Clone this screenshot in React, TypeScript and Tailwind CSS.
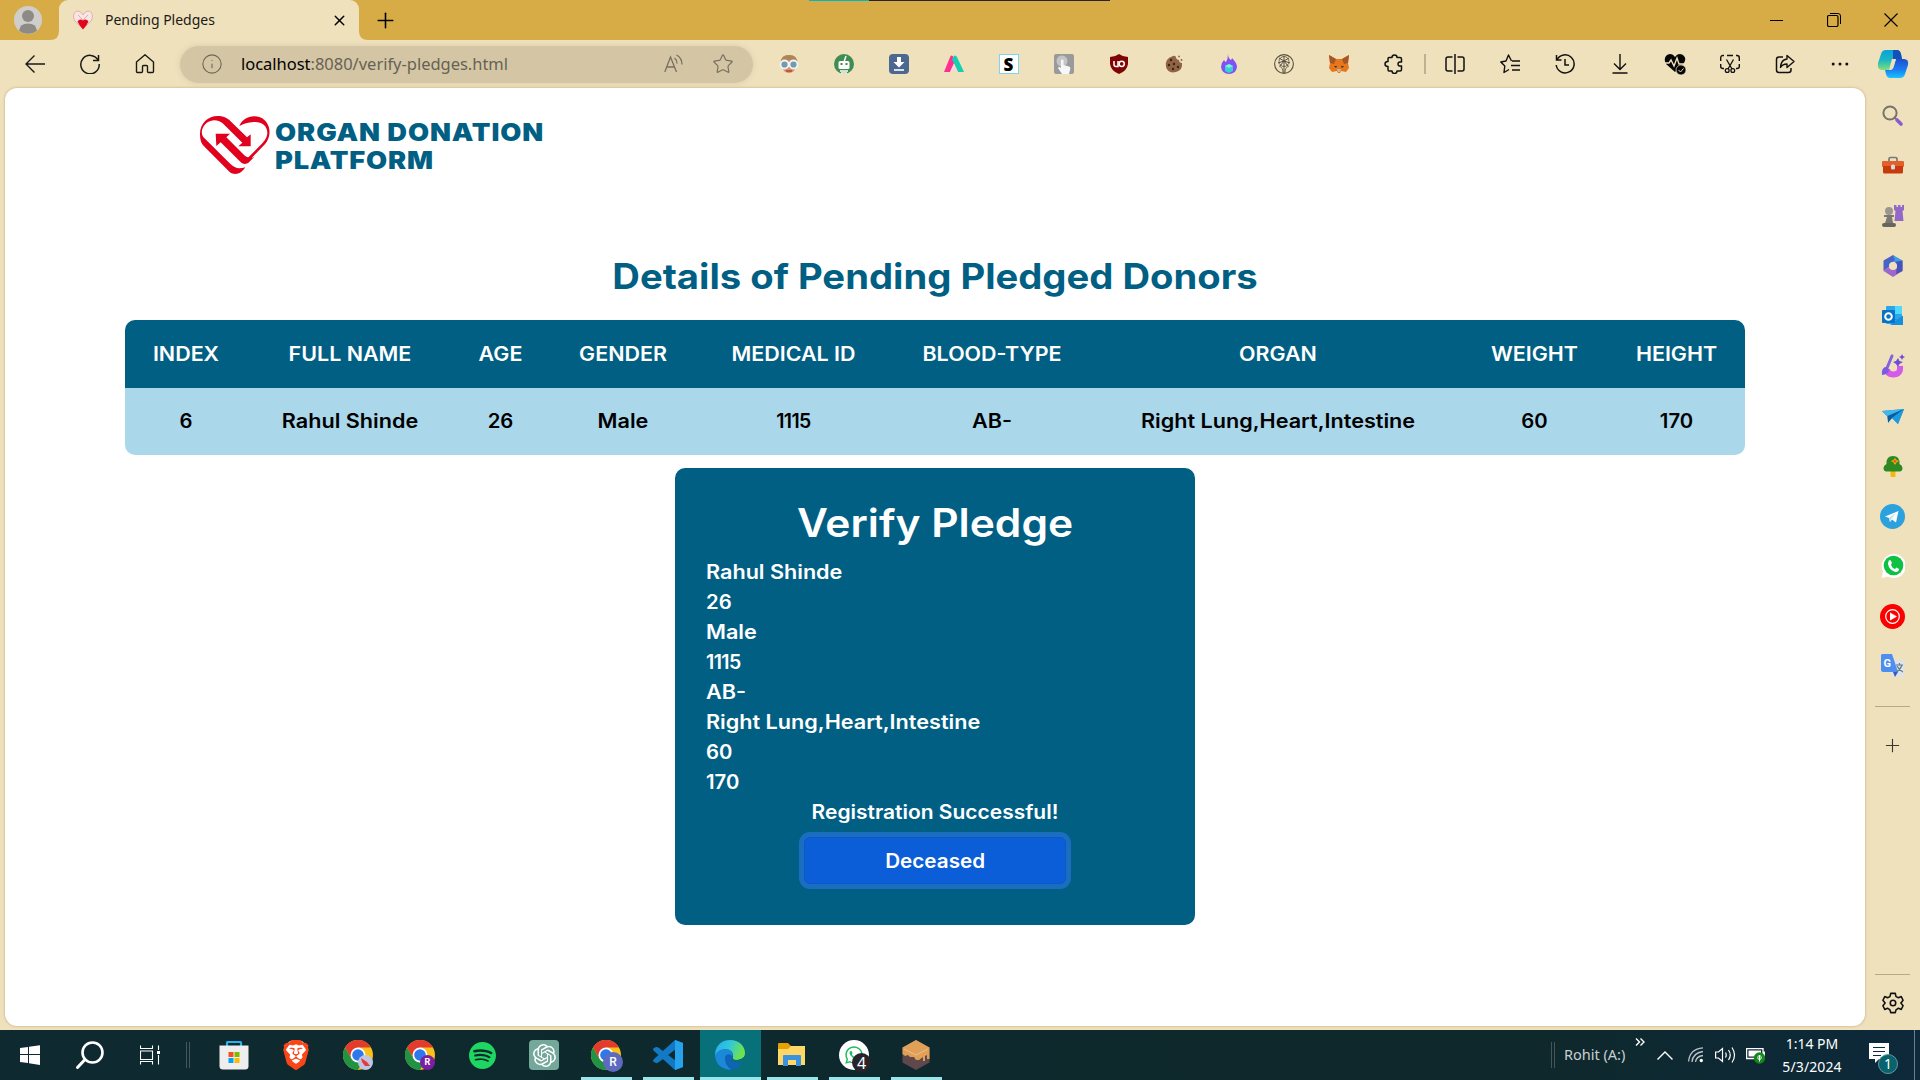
import React from "react";
import { Plus, X, Info, Star } from "lucide-react";
import { SiBrave, SiOpenai, SiSpotify } from "react-icons/si";
import { FaWhatsapp } from "react-icons/fa";

type SvgProps = { s?: number; w?: number; h?: number; box?: string; children: React.ReactNode; className?: string };
const Svg = ({ s = 24, w, h, box = "0 0 24 24", children, className }: SvgProps) => (
  <svg width={w ?? s} height={h ?? s} viewBox={box} fill="none" className={className}>
    {children}
  </svg>
);

const Cell = ({ children }: { children: React.ReactNode }) => (
  <div className="flex h-full w-[55px] shrink-0 items-center justify-center">{children}</div>
);

/* ---------- brand marks ---------- */

const HeartLogo = () => (
  <Svg w={71.7} h={60} box="55 45 215 180">
    <g fill="#e2001f">
      <path d="M58 104C56 66 90 42 122 49C134 51 143 57 152 66L199 112L210 103V139H173L185 128L126 70C104 52 72 62 64 91C62 105 66 110 73 116L147 190C163 207 176 207 194 202C182 221 163 228 147 216L70 139C61 130 58 118 58 104Z" />
      <path d="M105 101H148L137 112L191 166C199 174 211 176 221 170L205 187C196 194 187 193 179 185L120 127L107 138Z" />
      <path d="M176 78C186 53 214 43 238 52C264 62 273 93 262 118C257 130 249 137 241 145L204 183C198 188 194 189 190 189L195 180L236 139C247 128 259 116 260 99C260 75 240 64 219 66C202 67 188 72 176 78Z" />
    </g>
  </Svg>
);

const MiniHeart = () => (
  <Svg s={20} box="0 0 20 20">
    <path d="M10 19L2 11C-1 6 1 1 5 1Q8 1 10 5Q12 1 15 1C19 1 21 6 18 11Z" fill="#f9e6e3" stroke="#dfa9a4" strokeWidth=".9" />
    <path d="M4.500 11.500Q7 8 10 10.500Q13 8 15.500 11.500Q14 15 10 19.500Q6 15 4.500 11.500Z" fill="#e1051d" />
    <path d="M5 5L10 10L15 5" stroke="#dfa9a4" strokeWidth=".9" />
  </Svg>
);

const Chrome = ({ badge, color }: { badge: React.ReactNode; color: string }) => (
  <div className="relative h-[30px] w-[30px]">
    <Svg s={30} box="0 0 30 30">
      <circle cx="15" cy="15" r="15" fill="#fbc116" />
      <path d="M15 15L8.500 18.800L2 7.500A15 15 0 0 1 28 7.500H15Z" fill="#e33b2e" />
      <path d="M2 7.500L8.500 18.800A7.500 7.500 0 0 0 15 22.500L13.500 30A15 15 0 0 1 2 7.500Z" fill="#229342" />
      <path d="M15 30L21.500 18.800L15 22.500L8.500 18.800L13 30Z" fill="#229342" />
      <circle cx="15" cy="15" r="7.500" fill="#fff" />
      <circle cx="15" cy="15" r="5.800" fill="#2d78ea" />
    </Svg>
    <div className={"absolute flex items-center justify-center rounded-full font-['Roboto'] leading-none text-white " + color}>
      {badge}
    </div>
  </div>
);

const Copilot = () => (
  <Svg w={32} h={32} box="0 -1 32 30">
    <defs>
      <linearGradient id="ca" x1="0" y1="0" x2="0" y2="1"><stop stopColor="#0aa2dc" /><stop offset=".5" stopColor="#1bb6c2" /><stop offset="1" stopColor="#7ee07a" /></linearGradient>
      <linearGradient id="cb" x1="0" y1="0" x2="0" y2="1"><stop stopColor="#1d4fd0" /><stop offset=".55" stopColor="#1c7bf0" /><stop offset="1" stopColor="#19c5ff" /></linearGradient>
    </defs>
    <path d="M9 0H20Q23 0 24 4L25 9H19Q16 9 15 13L13 20H5Q0 20 1 13L4 4Q5 0 9 0Z" fill="url(#ca)" />
    <path d="M23 28H13Q10 28 9 24L8 20H13Q16 20 17 16L19 9H27Q32 9 31 15L28 24Q27 28 23 28Z" fill="url(#cb)" />
    <path d="M16 0H20Q23 0 24 4L25 9H19Q17 9 16 11Z" fill="#1450b8" />
    <path d="M15 9H19L16 17Q15 20 12 20Z" fill="#f0e1bd" />
  </Svg>
);

/* ---------- browser chrome ---------- */

const TabStrip = () => (
  <div className="relative flex h-10 items-stretch bg-[#d7ac46]">
    <div className="flex w-[59px] items-center pl-[14px]">
      <Svg s={28} box="0 0 28 28">
        <circle cx="14" cy="14" r="14" fill="#d0cecb" />
        <circle cx="14" cy="10" r="6" fill="#8e8b87" />
        <path d="M5 24.500Q6 17.500 14 17.500T23 24.500A14 14 0 0 1 5 24.500Z" fill="#8e8b87" />
      </Svg>
    </div>
    <div className="relative flex w-[300px] items-center rounded-t-[9px] bg-[#f0e1bd] pl-[14px]">
      <Svg s={9} box="0 0 9 9" className="absolute -left-[9px] bottom-0"><path d="M9 0V9H0Q9 9 9 0Z" fill="#f0e1bd" /></Svg>
      <Svg s={9} box="0 0 9 9" className="absolute -right-[9px] bottom-0"><path d="M0 0V9H9Q0 9 0 0Z" fill="#f0e1bd" /></Svg>
      <MiniHeart />
      <span className="ml-[12px] -mt-[2px] text-[14px] text-[#1b1a17]">Pending Pledges</span>
      <X size={17} strokeWidth={2} className="absolute right-[11px] top-[12px] text-black" />
    </div>
    <div className="flex w-[53px] items-center justify-center"><Plus size={25} strokeWidth={1.500} className="text-black" /></div>
    <div className="absolute left-[809px] top-0 flex h-px w-[301px] bg-[#2b2325]"><div className="w-[60px] bg-[#00b8c0]" /></div>
    <div className="ml-auto flex items-center text-black">
      <div className="flex w-[57px] justify-center"><Svg s={14} box="0 0 14 14"><path d="M0 7.500H13" stroke="#000" /></Svg></div>
      <div className="flex w-[57px] justify-center">
        <Svg s={14} box="0 0 14 14"><rect x=".5" y="2.500" width="10.500" height="11" rx="1.500" stroke="#000" strokeWidth="1.200" /><path d="M3 .5H11Q13.500 .5 13.500 3V11" stroke="#000" /></Svg>
      </div>
      <div className="flex w-[58px] justify-center"><Svg s={14} box="0 0 14 14"><path d="M.5 .5L13.500 13.500M13.500 .5L.5 13.500" stroke="#000" strokeWidth="1.100" /></Svg></div>
    </div>
  </div>
);

const extensions: React.ReactNode[] = [
  <Svg s={20} box="0 0 20 20">
    <path d="M2 10Q1 1 10 1T18 10L15 17Q10 21 5 17Z" fill="#d9906b" />
    <path d="M1.500 9Q2 1 10 1T18.500 9L14 6H6Z" fill="#a9875a" />
    <circle cx="5.500" cy="10.500" r="4" fill="#6f9cae" stroke="#f3f3f3" strokeWidth="1.800" /><circle cx="14.500" cy="10.500" r="4" fill="#6f9cae" stroke="#f3f3f3" strokeWidth="1.800" />
    <path d="M7 17H13" stroke="#b3493c" strokeWidth="1.500" />
  </Svg>,
  <Svg s={20} box="0 0 20 20">
    <circle cx="10" cy="10" r="10" fill="#3f8d50" />
    <path d="M10 8L12 2" stroke="#fff" strokeWidth="1.500" />
    <rect x="4.500" y="7" width="11" height="8" rx="1.500" fill="#fff" />
    <rect x="6.500" y="9" width="2" height="2" fill="#3f8d50" /><rect x="11.500" y="9" width="2" height="2" fill="#3f8d50" />
    <path d="M6 17H14M7 19H13" stroke="#fff" strokeWidth="1.500" />
  </Svg>,
  <Svg s={20} box="0 0 20 20">
    <rect width="20" height="20" rx="4" fill="#4c6790" />
    <path d="M8 3H12V8H15.500L10 13.500L4.500 8H8Z" fill="#fff" /><path d="M5 16H15" stroke="#fff" strokeWidth="1.600" />
  </Svg>,
  <Svg s={20} box="0 0 20 20">
    <path d="M0 18L6.500 2Q8 .5 9.500 3L11 7L6 18Z" fill="#ff2f92" /><path d="M8 5L10.500 1.500Q12 1 13 3L20 18H14Z" fill="#14cfb0" /><path d="M6 18L10 10L14 18Q10 15 6 18Z" fill="#fbd5db" />
  </Svg>,
  <div className="flex h-5 w-5 items-center justify-center border border-[#7fd6ee] bg-white font-['Noto_Sans'] text-[17px] font-black leading-none text-black">S</div>,
  <Svg s={20} box="0 0 20 20">
    <rect width="20" height="20" rx="2" fill="#9a9a9a" /><circle cx="8" cy="7" r="5.500" fill="#c4c4c4" />
    <path d="M7 6Q8.500 5 9.500 6V11L15 12.500Q17 13 16 16L15 20H8L4 14Q5 12 7 14Z" fill="#f4f8fa" />
  </Svg>,
  <Svg s={20} box="0 0 20 20">
    <path d="M10 0Q14 3 19 3V10Q18 17 10 20Q2 17 1 10V3Q6 3 10 0Z" fill="#800404" />
    <path d="M5 7V10.500Q5 12.500 7 12.500H9V7" stroke="#fff" strokeWidth="1.500" /><circle cx="12.700" cy="9.800" r="2.600" stroke="#fff" strokeWidth="1.500" />
  </Svg>,
  <Svg s={20} box="0 0 20 20">
    <path d="M9 2Q12 1 12 4Q13 6 15 6Q15 9 18 9Q19 16 12 18Q4 20 2 13Q0 5 9 2Z" fill="#8e6445" />
    <circle cx="7" cy="6" r="1.200" fill="#3b241a" /><circle cx="5" cy="11" r="1.200" fill="#3b241a" /><circle cx="10" cy="10" r="1.200" fill="#3b241a" /><circle cx="9" cy="15" r="1.200" fill="#3b241a" /><circle cx="14" cy="13" r="1.200" fill="#3b241a" /><circle cx="15" cy="2.500" r=".9" fill="#8e6445" /><circle cx="17.500" cy="6" r="1" fill="#8e6445" />
  </Svg>,
  <Svg s={20} box="0 0 20 20">
    <path d="M9 0Q9 4 12 6Q13 5 13 4Q18 9 18 13Q17 20 10 20Q3 20 2 13Q2 9 5 6Q6 8 7 8Q9 5 9 0Z" fill="#8250f5" />
    <path d="M10 10L14 12V17L10 19L6 17V12Z" fill="#35d3cf" /><path d="M10 10L14 12L10 14L6 12Z" fill="#7ff0df" />
  </Svg>,
  <Svg s={20} box="0 0 20 20">
    <circle cx="10" cy="10" r="9.400" stroke="#55503f" strokeWidth="1.100" />
    <path d="M10 7V19M10 7L5 4M10 7L15 4M10 7L4 9M10 7L16 9M10 7V2M10 7L6 12M10 7L14 12" stroke="#55503f" /><circle cx="10" cy="7.500" r="5" stroke="#55503f" strokeWidth=".8" /><path d="M5 12Q9 13 9 19M15 12Q11 13 11 19" stroke="#55503f" strokeWidth=".8" />
  </Svg>,
  <Svg s={20} box="0 0 20 20">
    <path d="M0 1L7 5H13L20 1L19 9L20 14L17 18L12 17L11 19H9L8 17L3 18L0 14L1 9Z" fill="#e8761b" /><path d="M0 1L7 5L5 10L1 9ZM20 1L13 5L15 10L19 9Z" fill="#a5552a" /><path d="M8 15L9 18H11L12 15Z" fill="#c6b8a8" /><path d="M5 12L8 12L7 14ZM15 12L12 12L13 14Z" fill="#2b3542" />
  </Svg>,
  <Svg s={20} box="0 0 20 20">
    <path d="M8 3.500Q8 1 10.500 1T13 3.500H16Q17.500 3.500 17.500 5V8Q14 7.500 14 10T17.500 12V15.500Q17.500 17 16 17H13Q13 19.500 10.500 19.500T8 17H5Q4 17 4 15.500V12.500Q1 12.500 1 10T4 7.500V5Q4 3.500 5 3.500Z" stroke="#111" strokeWidth="1.500" strokeLinejoin="round" />
  </Svg>,
];

const tools: React.ReactNode[] = [
  <Svg s={20} box="0 0 20 20"><path d="M7.500 3H3Q1 3 1 5V15Q1 17 3 17H7.500M12.500 3H17Q19 3 19 5V15Q19 17 17 17H12.500M10 0V20" stroke="#111" strokeWidth="1.500" /></Svg>,
  <Svg s={20} box="0 0 20 20"><path d="M11.500 7L8.500 1L6 7L.8 8L4.800 12L4 18.500L9 15.500" stroke="#111" strokeWidth="1.400" strokeLinejoin="round" /><path d="M12 7H20M11 11.500H20M12 16H20" stroke="#111" strokeWidth="1.400" /></Svg>,
  <Svg s={20} box="0 0 20 20"><path d="M1.500 1V6H6.500M2 6A9 9 0 1 1 1.200 11M10 5V11H14" stroke="#111" strokeWidth="1.500" /></Svg>,
  <Svg s={20} box="0 0 20 20"><path d="M10 0V15.500M4 9.500L10 15.500L16 9.500M2.500 19H17.500" stroke="#111" strokeWidth="1.400" /></Svg>,
  <Svg s={22} box="0 0 22 22"><path d="M11 19L2 11Q-1 5 3 2Q8-1 11 4Q14-1 19 2Q23 5 20 10Z" fill="#060606" /><path d="M1 10H5L7 7L10 13L13 5L15 11H20" stroke="#f0e1bd" strokeWidth="1.400" /><circle cx="17" cy="17" r="5" fill="#060606" stroke="#f0e1bd" strokeWidth=".7" /><path d="M14.500 17L16.500 19L19.500 15.500" stroke="#f0e1bd" /></Svg>,
  <Svg s={20} box="0 0 20 20"><path d="M4 14.500H3Q.7 14.500 .7 12.500V10M.7 7V4Q.7 1.500 3 1.500H4M7 1.500H13M16 1.500H17Q19.300 1.500 19.300 4V7M19.300 10V12.500Q19.300 14.500 17 14.500H16" stroke="#111" strokeWidth="1.400" /><path d="M6.500 5.500L12 15M13.500 5.500L8 15" stroke="#111" strokeWidth="1.300" /><circle cx="7.200" cy="16.500" r="1.900" stroke="#111" strokeWidth="1.300" /><circle cx="12.800" cy="16.500" r="1.900" stroke="#111" strokeWidth="1.300" /></Svg>,
  <Svg s={20} box="0 0 20 20"><path d="M8 3H4Q1.500 3 1.500 5.500V16Q1.500 18.500 4 18.500H13.500Q16 18.500 16 16V14" stroke="#111" strokeWidth="1.500" /><path d="M12 1.500L19 7.500L12 13.500V10Q7.500 10 5.500 13.500Q6 5.500 12 5Z" stroke="#111" strokeWidth="1.400" strokeLinejoin="round" /></Svg>,
  <Svg s={18} box="0 0 18 18"><circle cx="2.200" cy="9" r="1.500" fill="#111" /><circle cx="9" cy="9" r="1.500" fill="#111" /><circle cx="15.800" cy="9" r="1.500" fill="#111" /></Svg>,
];

const Toolbar = () => (
  <div className="flex h-12 items-center bg-[#f0e1bd] pl-[7px]">
    <Cell><Svg s={20} box="0 0 20 20"><path d="M20 10H1M9.500 1.500L1 10L9.500 18.500" stroke="#1a1a17" strokeWidth="1.400" /></Svg></Cell>
    <Cell><Svg s={20} box="0 0 20 20"><path d="M18.500 1V6.500H13M18 6A9.200 9.200 0 1 0 19.200 10" stroke="#1a1a17" strokeWidth="1.500" /></Svg></Cell>
    <Cell><Svg s={20} box="0 0 20 20"><path d="M1.500 8L10 .8L18.500 8V17.500Q18.500 18.500 17.500 18.500H13.500Q12.500 18.500 12.500 17.500V12.500Q12.500 11.500 11.500 11.500H8.500Q7.500 11.500 7.500 12.500V17.500Q7.500 18.500 6.500 18.500H2.500Q1.500 18.500 1.500 17.500Z" stroke="#1a1a17" strokeWidth="1.400" /></Svg></Cell>
    <div className="ml-[8px] flex h-[37px] w-[573px] shrink-0 items-center rounded-full bg-[#d4c6a5] pl-[21px] pr-[19px] shadow-[0_0_6px_#d9cba9]">
      <Info size={22} strokeWidth={1.200} className="text-[#6f6856]" />
      <span className="ml-[18px] text-[16.500px] tracking-[-0.020px] text-[#676254]"><span className="text-black">localhost</span>:8080/verify-pledges.html</span>
      <div className="ml-auto flex items-center gap-[28px]">
        <Svg s={20} box="0 0 20 20"><path d="M.8 18L6.500 3L12.500 18M3 13H10.500" stroke="#77705f" strokeWidth="1.300" /><path d="M10.500 4Q13 6 13 9.500M12.500 1Q18 4 18 10.500" stroke="#77705f" strokeWidth="1.300" /></Svg>
        <Star size={22} strokeWidth={1.300} className="text-[#77705f]" />
      </div>
    </div>
    <div className="ml-[8px] flex h-full">{extensions.map((e, i) => <Cell key={i}>{e}</Cell>)}</div>
    <div className="ml-[3px] mr-[1.500px] h-5 w-[1.500px] bg-[#bcb193]" />
    <div className="flex h-full">{tools.map((e, i) => <Cell key={i}>{e}</Cell>)}</div>
    <div className="ml-auto mr-[11px]"><Copilot /></div>
  </div>
);

const sideIcons: React.ReactNode[] = [
  <Svg s={22} box="0 0 22 22"><circle cx="8" cy="8" r="6.600" stroke="#77736c" strokeWidth="2" /><path d="M12 12L14 14" stroke="#77736c" strokeWidth="2" /><path d="M15 15L19 19" stroke="#8a5bd0" strokeWidth="3.600" strokeLinecap="round" /></Svg>,
  <Svg s={22} box="0 0 22 22"><path d="M7 7V4Q7 2.500 8.500 2.500H13.500Q15 2.500 15 4V7" stroke="#777" strokeWidth="1.700" /><rect y="6" width="22" height="6" rx="1" fill="#e1602b" /><path d="M1 11H21V17Q21 18.500 19.500 18.500H2.500Q1 18.500 1 17Z" fill="#c63a0b" /><rect x="9" y="9.500" width="4" height="5" rx="1.500" fill="#d8dce0" /></Svg>,
  <Svg s={22} box="0 0 22 22"><circle cx="7" cy="6" r="4" fill="#9a9792" /><path d="M2 10H12V12H10L11 18H3L5 12H2Z" fill="#7b7874" /><rect y="18" width="14" height="4" rx="2" fill="#686560" /><path d="M12 0H14.500V2H16V0H18.500V2H20V0H22V5L20.500 6L21.500 16H12.500L13.500 6L12 5Z" fill="#9468c9" /></Svg>,
  <Svg s={22} box="0 0 22 22"><path d="M11 0L20.500 5.500V12L14 8Q11 6 8 9Z" fill="#3e9ee5" /><path d="M11 0L1.500 5.500V16L7 12Q7 8 13 5Z" fill="#4a62c8" /><path d="M1.500 16L11 22L20.500 16V10L14 13Q10 16 7 12Z" fill="#9e67c9" /><path d="M20.500 5.500V16L14 19L15 11L13 7Z" fill="#4554b8" /><circle cx="11" cy="11" r="4" fill="#f0e1bd" /></Svg>,
  <Svg s={22} box="0 0 22 22"><rect x="4" y="1" width="16" height="18" rx="1" fill="#28a8ea" /><path d="M13 1H20V9H13Z" fill="#50d9ff" /><path d="M9 12L21 19V11L15 15Z" fill="#0f6ab7" /><path d="M8 20H21V11Z" fill="#1490df" /><rect x="0" y="5" width="13" height="13" rx="1" fill="#0872c6" /><circle cx="6.500" cy="11.500" r="3.300" stroke="#fff" strokeWidth="2" /></Svg>,
  <Svg s={24} box="0 0 24 24"><path d="M19 12Q20 20.500 12 20.500Q6 20 6 15" stroke="#d45ae9" strokeWidth="6" /><path d="M11 2L6 14" stroke="#7f66df" strokeWidth="3" strokeLinecap="round" /><path d="M1 21Q0 15 4 13Q8 13 8 17Q7 20 1 21Z" fill="#7a5be1" /><path d="M17 4L18.500 7L22 8L18.500 10L17 13L15 10L12 8L15 7ZM21 0L22 2L24 3L22 4L21 6L20 4L18 3L20 2Z" fill="#714bd9" /></Svg>,
  <Svg s={22} box="0 0 22 22"><path d="M0 6L22 4L16 19L10 13L6 17L5 11Z" fill="#158bd0" /><path d="M0 6L22 4L5 11Z" fill="#42b6ed" /><path d="M22 4L10 13L6 18L6 11Z" fill="#0b5d9c" /><path d="M22 4L16 19L10 13Z" fill="#1d9be0" /></Svg>,
  <Svg s={22} box="0 0 22 22"><rect x="8.500" y="14" width="5" height="8" rx="1" fill="#f2b90e" /><path d="M4 16.500Q1.500 16 1.500 13Q1.500 10.500 4.500 9Q4 1 11 1T17.500 9Q20.500 10.500 20.500 13Q20.500 16 18 16.500Z" fill="#2e8921" /><path d="M13 3L14.500 5L17 6L14.500 7.500L13 10L11.500 7.500L9 6L11.500 5Z" fill="#f5b400" /><circle cx="13" cy="6.300" r="1.400" fill="#e4552b" /></Svg>,
  <Svg s={25} box="0 0 25 25"><circle cx="12.500" cy="12.500" r="12.500" fill="#2ba1dd" /><path d="M5 12.500L18.500 7L16 18.500L12 15.500L10 18L9 14Z" fill="#fff" /><path d="M9 14L16 9L11 15L10 18Z" fill="#b9dcee" /></Svg>,
  <Svg s={24} box="0 0 24 24"><path d="M12.500 0A12 12 0 1 1 7 22.500L.5 24L2 17.500A12 12 0 0 1 12.500 0Z" fill="#fff" /><circle cx="12.500" cy="11.500" r="9.800" fill="#0fc143" /><path d="M8 6.500Q9 5.500 10 7L11 9Q10 10 10 11Q11 14 14 15L15.500 13.500L18 15Q18 18 14.500 18Q8 16 7 10Q7 7.500 8 6.500Z" fill="#fff" /></Svg>,
  <Svg s={25} box="0 0 25 25"><circle cx="12.500" cy="12.500" r="12.500" fill="#fd0000" /><circle cx="12.500" cy="12.500" r="6.800" stroke="#fff" strokeWidth="1.200" /><path d="M10 8.500L17 12.500L10 16.500Z" fill="#fff" /></Svg>,
  <div className="relative h-6 w-6">
    <Svg s={24}><rect x="10" y="6" width="13.500" height="17" rx="1" fill="#dfe3e6" /><path d="M1 0H11L17 18H2Q0 18 0 16V1Z" fill="#4e8ef3" /><path d="M12 18H17L14 23Z" fill="#3558c8" /><path d="M15 11H22M18.500 9V11M21 11Q19 16 15.500 18M16 12Q18 16 22 18" stroke="#5d7d87" strokeWidth="1.200" /></Svg>
    <span className="absolute left-[3px] top-[4px] font-['Roboto'] text-[11px] font-bold leading-none text-white">G</span>
  </div>,
];

const Sidebar = () => (
  <aside className="flex w-[55px] shrink-0 flex-col items-center">
    <div className="mt-[3px] flex flex-col">{sideIcons.map((e, i) => <div key={i} className="flex h-[50px] items-center justify-center">{e}</div>)}</div>
    <div className="mt-[15px] h-px w-[35px] bg-[#b5a98b]" />
    <Plus size={21} strokeWidth={1.300} className="mt-[28px] text-[#3d382e]" />
    <div className="mt-auto h-px w-[35px] bg-[#b5a98b]" />
    <Svg s={22} box="0 0 24 24" className="mb-[16px] mt-[17px]">
      <path d="M9.500 1.500H14.500L15.300 5L18 6.300L21 5L23 9L20.600 12L23 15L21 19L18 17.700L15.300 19.500L14.500 22.500H9.500L8.700 19.500L6 17.700L3 19L1 15L3.400 12L1 9L3 5L6 6.300L8.700 5Z" stroke="#111" strokeWidth="1.700" strokeLinejoin="round" /><circle cx="12" cy="12" r="3" stroke="#111" strokeWidth="1.700" />
    </Svg>
  </aside>
);

/* ---------- page ---------- */

const columns = [
  ["INDEX", "6"], ["FULL NAME", "Rahul Shinde"], ["AGE", "26"], ["GENDER", "Male"], ["MEDICAL ID", "1115"],
  ["BLOOD-TYPE", "AB-"], ["ORGAN", "Right Lung,Heart,Intestine"], ["WEIGHT", "60"], ["HEIGHT", "170"],
];
const gridCols = "grid grid-cols-[122px_206px_95px_150px_191px_206px_366px_147px_137px] items-center text-center";

/* Words are set in a wide cut of the face, digits stay close to normal width. */
const stretch = (value: string) =>
  value === "1115" ? "tracking-[-0.600px]" : /^\d+$/.test(value) ? "scale-x-[1.04]" : "scale-x-[1.108]";

const PledgePage = () => (
  <main className="ml-[5px] h-[938px] w-[1860px] shrink-0 overflow-hidden rounded-[12px] bg-white font-['Inter',sans-serif] font-semibold shadow-[0_0_3px_#b9a97e]">
    <header className="flex h-[60px] pl-[193.500px] mt-[27px]">
      <HeartLogo />
      <div className="ml-[5px] mt-[4px] text-[24px] font-black leading-[27.500px] text-[#015f84]">
        <div className="origin-left scale-x-[1.135] whitespace-nowrap tracking-[0.800px]">ORGAN DONATION</div>
        <div className="origin-left scale-x-[1.135] tracking-[0.700px]">PLATFORM</div>
      </div>
    </header>
    <h1 className="mt-[80px] scale-x-[1.092] text-center text-[35px] font-bold leading-[42px] text-[#015f84]">Details of Pending Pledged Donors</h1>
    <div className="ml-[120px] mt-[23px] w-[1620px] overflow-hidden rounded-[10px] text-[19.500px]">
      <div className={gridCols + " h-[68px] bg-[#015f84] pt-px text-white"}>{columns.map(([h]) => <div key={h} className="scale-x-[1.1]">{h}</div>)}</div>
      <div className={gridCols + " h-[67px] bg-[#abd7eb] text-black"}>{columns.map(([h, v]) => <div key={h} className={stretch(v)}>{v}</div>)}</div>
    </div>
    <section className="mx-auto mt-[13px] h-[457px] w-[520px] rounded-[10px] bg-[#015f84] px-[31px] pt-[30px] text-[19.500px] leading-[30px] text-white">
      <h2 className="scale-x-[1.09] text-center text-[39px] leading-[50px]">Verify Pledge</h2>
      <div className="mt-[9px]">{columns.slice(1).map(([h, v]) => <p key={h} className={"origin-left " + stretch(v)}>{v}</p>)}</div>
      <p className="scale-x-[1.075] text-center">Registration Successful!</p>
      <button className="mx-auto mt-[10px] block h-[47px] w-[262px] rounded-[6px] border border-[#0a58ca] bg-[#0b5ed7] shadow-[0_0_0_5px_#1b6ebf]"><span className="inline-block scale-x-[1.06]">Deceased</span></button>
    </section>
  </main>
);

/* ---------- taskbar ---------- */

const apps: { icon: React.ReactNode; open?: boolean; active?: boolean }[] = [
  { icon: <Svg w={30} h={30} box="0 0 30 30"><path d="M8 6V2.500Q8 2 8.500 2H21.500Q22 2 22 2.500V6" stroke="#27b2f2" strokeWidth="2.200" /><path d="M.5 5.500H29.500V26Q29.500 29.500 26 29.500H4Q.5 29.500 .5 26Z" fill="#eee" /><path d="M9.500 12H14.500V17H9.500Z" fill="#f25022" /><path d="M15.500 12H20.500V17H15.500Z" fill="#7fba00" /><path d="M9.500 18H14.500V23H9.500Z" fill="#00a4ef" /><path d="M15.500 18H20.500V23H15.500Z" fill="#ffb900" /></Svg> },
  { icon: <div className="relative flex h-[30px] w-[30px] items-center justify-center"><Svg w={26} h={30} box="0 0 26 30" className="absolute left-[2px]"><path d="M7 1H19L22 4L24 9L22 22L13 29L4 22L2 9L4 4Z" fill="#fff" /></Svg><SiBrave size={30} color="#fb4516" className="relative" /></div> },
  { icon: <Chrome color="left-[15px] top-[15px] h-[15px] w-[15px] bg-[#c0c6e2]" badge={<Svg s={9} box="0 0 9 9"><path d="M0 0L6 4L9 8L4 8L1 4Z" fill="#e23a3f" /></Svg>} /> },
  { icon: <Chrome color="left-[15px] top-[15px] h-[15px] w-[15px] bg-[#7b1fa2] text-[9px] font-bold" badge="R" /> },
  { icon: <SiSpotify size={27} color="#1ed760" /> },
  { icon: <div className="flex h-[30px] w-[30px] items-center justify-center rounded-[4px] bg-[#74a89a]"><SiOpenai size={23} color="#fff" /></div> },
  { icon: <Chrome color="left-[12px] top-[12px] h-[20px] w-[20px] bg-[#5c6bc0] text-[12px] font-medium" badge="R" />, open: true },
  { icon: <Svg w={30} h={30} box="0 0 30 30"><path d="M22 0L30 3V27L22 30L1 11Q-1 9 1 8L3 7Q4 6.500 6 8L23 21V9L6 22Q4 23.500 3 23L1 22Q-1 21 1 19Z" fill="#1279c4" /><path d="M22 0L30 3V27L22 30Z" fill="#26a3ed" /></Svg>, open: true },
  { icon: <Svg w={30} h={30} box="0 0 30 30"><defs><linearGradient id="ed" x1="0" y1="0" x2="1" y2=".3"><stop stopColor="#29a8ec" /><stop offset=".5" stopColor="#30c7dd" /><stop offset="1" stopColor="#6ee34e" /></linearGradient></defs><circle cx="15" cy="15" r="15" fill="#0f64b5" /><path d="M0 14C1 4 8 0 15 0C25 0 30 7 30 13C30 18 26 20 21 20Q17 20 18 17Q19 10 11 9Q4 9 0 16Z" fill="url(#ed)" /><path d="M0 15Q3 9 11 9Q18 10 18 16Q12 12 10 17Q9 24 16 29.800Q1 29 0 15Z" fill="#1b88d8" /><path d="M18 17Q17 20 21 20Q26 20 30 16V22L28 23Q25 23.500 20 22.500Q15 20 18 17Z" fill="#087078" /></Svg>, active: true },
  { icon: <Svg w={28} h={26} box="0 0 28 26"><path d="M0 2Q0 1 1 1H10L13 4H27V10H0Z" fill="#e5a100" /><path d="M0 7H10L13 4H27V23H0Z" fill="#ffd766" /><path d="M5 24V14Q5 13 6 13H22Q23 13 23 14V24H18V18H10V24Z" fill="#3b93de" /></Svg>, open: true },
  { icon: <div className="relative flex h-[30px] w-[30px] items-center justify-center rounded-full bg-white"><FaWhatsapp size={20} color="#20bd5a" /><div className="absolute left-[13px] top-[13px] flex h-[19px] w-[19px] items-center justify-center rounded-full bg-[#27252b] text-[16px] leading-none text-white">4</div></div>, open: true },
  { icon: <Svg w={28} h={30} box="0 0 28 30"><path d="M14 0L27.500 7.500V22.500L14 30L.5 22.500V7.500Z" fill="#5e484c" /><path d="M14 0L27.500 7.500V19H25V15L23 16V21H21V17L17 20H14L12 17H8L6 15L3 16L.5 14V7.500Z" fill="#e0a058" /><path d="M2 9L14 15L26 9" stroke="#efbe80" /></Svg>, open: true },
];

const Taskbar = () => (
  <footer className="flex h-[50px] items-stretch bg-linear-to-r from-[#0e2a30] via-[#0e282b] via-80% to-[#0d293b] text-white">
    <div className="flex w-[60px] items-center justify-center"><Svg s={20} box="0 0 20 20"><path d="M0 3L8 2V9H0ZM9 1.800L20 .3V9H9ZM0 10H8V18L0 17ZM9 10H20V20L9 18.300Z" fill="#fff" /></Svg></div>
    <div className="flex w-[60px] items-center justify-center"><Svg s={28} box="0 0 28 28"><circle cx="16.500" cy="11.500" r="10" stroke="#fff" strokeWidth="2.600" /><path d="M9 18.500L1.500 26.500" stroke="#fff" strokeWidth="3" strokeLinecap="round" /></Svg></div>
    <div className="flex w-[60px] items-center justify-center"><Svg s={20} box="0 0 20 20"><path d="M.5 .5V3.500H12.500V.5M.5 19.500V16.500H12.500V19.500M.5 6H12.500V14.500H.5ZM18.500 .5V5M18.500 10V19.500" stroke="#fff" strokeWidth="1.100" /><rect x="17" y="6" width="3" height="3" fill="#fff" /></Svg></div>
    <div className="ml-[6px] mr-[13px] mt-3 h-[26px] w-[4px] border-x border-[#42565b]" />
    {apps.map((a, i) => (
      <div key={i} className="flex w-[62px] shrink-0 items-center justify-center">
        <div className={"relative flex h-full items-center justify-center " + (a.active ? "w-[61px] bg-[#087078]" : "w-[51px]")}>
          {a.icon}
          {(a.open || a.active) && <div className="absolute bottom-0 left-0 h-[3px] w-full bg-[#98e6ea]" />}
        </div>
      </div>
    ))}
    <div className="ml-auto flex items-center">
      <div className="h-[26px] w-[4px] border-x border-[#42565b]" />
      <span className="ml-[9px] w-[62px] whitespace-nowrap text-[14.500px] text-[#c9cfd1]">Rohit (A:)</span>
      <Svg w={10} h={8} box="0 0 10 8" className="mb-[26px] ml-[9px]"><path d="M1 .5L4.500 4L1 7.500M5.500 .5L9 4L5.500 7.500" stroke="#fff" strokeWidth="1.400" /></Svg>
      <Svg w={16} h={9} box="0 0 16 9" className="ml-[12px]"><path d="M.5 8.500L8 1L15.500 8.500" stroke="#fff" strokeWidth="1.400" /></Svg>
      <Svg w={16} h={16} box="0 0 16 16" className="ml-[15px]"><path d="M.6 14.500Q1.500 2 15 .8M4 15Q4.500 6 15 4.500M7.500 15Q8 9.500 15 8.500" stroke="#bac4c8" strokeWidth="1.300" /><circle cx="13.300" cy="13.500" r="1.700" fill="#fff" /></Svg>
      <Svg w={21} h={18} box="0 0 21 18" className="ml-[11px]"><path d="M.6 6H3.500L7.500 2.500V15.500L3.500 12H.6Z" stroke="#fff" strokeWidth="1.200" /><path d="M10.500 6.500Q12 9 10.500 11.500M13.500 4Q17 9 13.500 14M17 1.500Q22 9 17 16.500" stroke="#fff" strokeWidth="1.200" /></Svg>
      <Svg w={20} h={17} box="0 0 20 17" className="ml-[10px]"><path d="M.6 1.600H17V11.500H.6ZM18.300 4.500V9" stroke="#fff" strokeWidth="1.300" /><rect x="2.500" y="3.500" width="12.500" height="6" fill="#fff" /><circle cx="13.500" cy="11" r="5.700" fill="#13891c" /><path d="M13.500 8V14.500M13.500 8Q10 11 13.500 13Q17 11 13.500 8Z" stroke="#fff" /></Svg>
      <div className="ml-[15px] w-[62px] whitespace-nowrap text-center text-[14px] leading-[23px]"><div>1:14 PM</div><div className="-mx-2 tracking-[0.100px]">5/3/2024</div></div>
      <div className="relative ml-[26px] h-[20px] w-[30px]">
        <Svg w={20} h={20} box="0 0 20 20" className="-mt-[2px]"><path d="M0 0H20V16H10L6 20V16H0Z" fill="#fff" /><path d="M4 4.500H16M4 8.500H16M4 12.500H12" stroke="#0d293b" strokeWidth="1.200" /></Svg>
        <div className="absolute left-[9px] top-[9px] flex h-[20px] w-[20px] items-center justify-center rounded-full border border-[#5a9ba0] bg-[#0a626c] text-[14px] leading-none">1</div>
      </div>
      <div className="ml-[15px] mr-[5px] h-[50px] w-px bg-[#6d7f88]" />
    </div>
  </footer>
);

export default function App() {
  return (
    <div className="flex h-[1080px] w-[1920px] flex-col overflow-hidden bg-[#f0e1bd] font-['Noto_Sans',sans-serif]">
      <TabStrip />
      <Toolbar />
      <div className="flex h-[942px]">
        <PledgePage />
        <Sidebar />
      </div>
      <Taskbar />
    </div>
  );
}
